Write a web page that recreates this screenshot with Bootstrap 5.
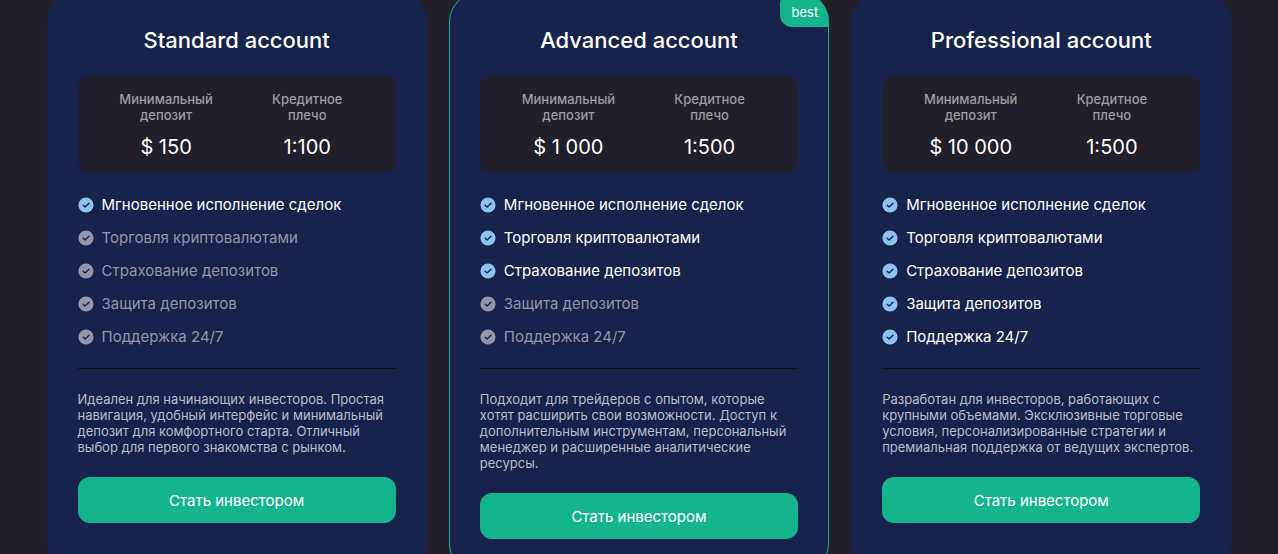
<!DOCTYPE html>
<html lang="ru">
<head>
<meta charset="utf-8">
<meta name="viewport" content="width=device-width, initial-scale=1">
<title>Accounts</title>
<link href="https://cdn.jsdelivr.net/npm/bootstrap@5.3.0/dist/css/bootstrap.min.css" rel="stylesheet">
<style>
  body { background: #201f2a; color: #fff; font-family: Inter, "Liberation Sans", sans-serif; }
  .plans { margin-top: -8px; }
  .plans-grid { max-width: 1185px; gap: 22px; }
  .plan { flex: 1 1 0; min-width: 0; padding: 30px 30px 34px; background: #18234c; border: 1px solid transparent; border-radius: 30px; }
  .plan-best { border-color: #15b48c; }
  .plan-flag { top: -1px; right: -1px; padding: 12px 11px 6px 12px; background: #15b48c; border-radius: 12px 30px 0 12px; font-size: 13px; line-height: 17px; }
  .plan-title { margin: 0 0 18px; font-size: 22px; line-height: 35px; font-weight: 500; }
  .plan-stats { padding: 15px 18px 11px; margin-bottom: 22px; background: #201f2a; border-radius: 12px; }
  .plan-stats dt { font-size: 13px; line-height: 16px; font-weight: 500; color: #9c9ca1; }
  .plan-stats dd { margin: 9px 0 0; font-size: 20px; line-height: 30px; }
  .plan-features { gap: 13px; margin-bottom: 21px; font-size: 15px; line-height: 20px; }
  .plan-features li { gap: 8px; }
  .plan-features svg { width: 16px; height: 16px; color: #8ec0f2; flex: none; }
  .plan-features .off { color: #9496a8; }
  .plan-features .off svg { color: #9496a8; }
  .plan-line { margin: 0 0 22px; border-top: 1px solid #111; opacity: 1; }
  .plan-text { margin: 0 0 22px; font-size: 13px; line-height: 16px; color: #b9bdc9; }
  .plan-btn { padding: 12px 11px 10px; background: #15b48c; border-radius: 12px; color: #fff; font-size: 15px; line-height: 24px; border: 0; }
  .plan-btn:hover { background: #12a07c; color: #fff; }
</style>
</head>
<body>
<svg class="d-none" aria-hidden="true">
  <symbol id="check" viewBox="0 0 16 16">
    <circle cx="8" cy="8" r="7.6" fill="currentColor"/>
    <path d="M5.2 8.3l1.9 1.8L11 6.3" fill="none" stroke="#18234c" stroke-width="1.4" stroke-linecap="round" stroke-linejoin="round"/>
  </symbol>
</svg>
<div class="vh-100 overflow-hidden">
<main class="plans">
  <div class="plans-grid d-flex mx-auto">
    <section class="plan">
      <h2 class="plan-title text-center">Standard account</h2>
      <div class="plan-stats d-flex text-center">
        <dl class="w-50 m-0"><dt>Минимальный<br>депозит</dt><dd>$ 150</dd></dl>
        <dl class="w-50 m-0"><dt>Кредитное<br>плечо</dt><dd>1:100</dd></dl>
      </div>
      <ul class="plan-features list-unstyled d-flex flex-column">
        <li class="d-flex align-items-center"><svg><use href="#check"/></svg>Мгновенное исполнение сделок</li>
        <li class="d-flex align-items-center off"><svg><use href="#check"/></svg>Торговля криптовалютами</li>
        <li class="d-flex align-items-center off"><svg><use href="#check"/></svg>Страхование депозитов</li>
        <li class="d-flex align-items-center off"><svg><use href="#check"/></svg>Защита депозитов</li>
        <li class="d-flex align-items-center off"><svg><use href="#check"/></svg>Поддержка 24/7</li>
      </ul>
      <hr class="plan-line">
      <p class="plan-text">Идеален для начинающих инвесторов. Простая навигация, удобный интерфейс и минимальный депозит для комфортного старта. Отличный выбор для первого знакомства с рынком.</p>
      <button type="button" class="plan-btn btn w-100">Стать инвестором</button>
    </section>
    <section class="plan plan-best position-relative">
      <span class="plan-flag position-absolute">best</span>
      <h2 class="plan-title text-center">Advanced account</h2>
      <div class="plan-stats d-flex text-center">
        <dl class="w-50 m-0"><dt>Минимальный<br>депозит</dt><dd>$ 1 000</dd></dl>
        <dl class="w-50 m-0"><dt>Кредитное<br>плечо</dt><dd>1:500</dd></dl>
      </div>
      <ul class="plan-features list-unstyled d-flex flex-column">
        <li class="d-flex align-items-center"><svg><use href="#check"/></svg>Мгновенное исполнение сделок</li>
        <li class="d-flex align-items-center"><svg><use href="#check"/></svg>Торговля криптовалютами</li>
        <li class="d-flex align-items-center"><svg><use href="#check"/></svg>Страхование депозитов</li>
        <li class="d-flex align-items-center off"><svg><use href="#check"/></svg>Защита депозитов</li>
        <li class="d-flex align-items-center off"><svg><use href="#check"/></svg>Поддержка 24/7</li>
      </ul>
      <hr class="plan-line">
      <p class="plan-text">Подходит для трейдеров с опытом, которые хотят расширить свои возможности. Доступ к дополнительным инструментам, персональный менеджер и расширенные аналитические ресурсы.</p>
      <button type="button" class="plan-btn btn w-100">Стать инвестором</button>
    </section>
    <section class="plan">
      <h2 class="plan-title text-center">Professional account</h2>
      <div class="plan-stats d-flex text-center">
        <dl class="w-50 m-0"><dt>Минимальный<br>депозит</dt><dd>$ 10 000</dd></dl>
        <dl class="w-50 m-0"><dt>Кредитное<br>плечо</dt><dd>1:500</dd></dl>
      </div>
      <ul class="plan-features list-unstyled d-flex flex-column">
        <li class="d-flex align-items-center"><svg><use href="#check"/></svg>Мгновенное исполнение сделок</li>
        <li class="d-flex align-items-center"><svg><use href="#check"/></svg>Торговля криптовалютами</li>
        <li class="d-flex align-items-center"><svg><use href="#check"/></svg>Страхование депозитов</li>
        <li class="d-flex align-items-center"><svg><use href="#check"/></svg>Защита депозитов</li>
        <li class="d-flex align-items-center"><svg><use href="#check"/></svg>Поддержка 24/7</li>
      </ul>
      <hr class="plan-line">
      <p class="plan-text">Разработан для инвесторов, работающих с крупными объемами. Эксклюзивные торговые условия, персонализированные стратегии и премиальная поддержка от ведущих экспертов.</p>
      <button type="button" class="plan-btn btn w-100">Стать инвестором</button>
    </section>
  </div>
</main>
</div>
<script src="https://cdn.jsdelivr.net/npm/bootstrap@5.3.0/dist/js/bootstrap.bundle.min.js"></script>
</body>
</html>
